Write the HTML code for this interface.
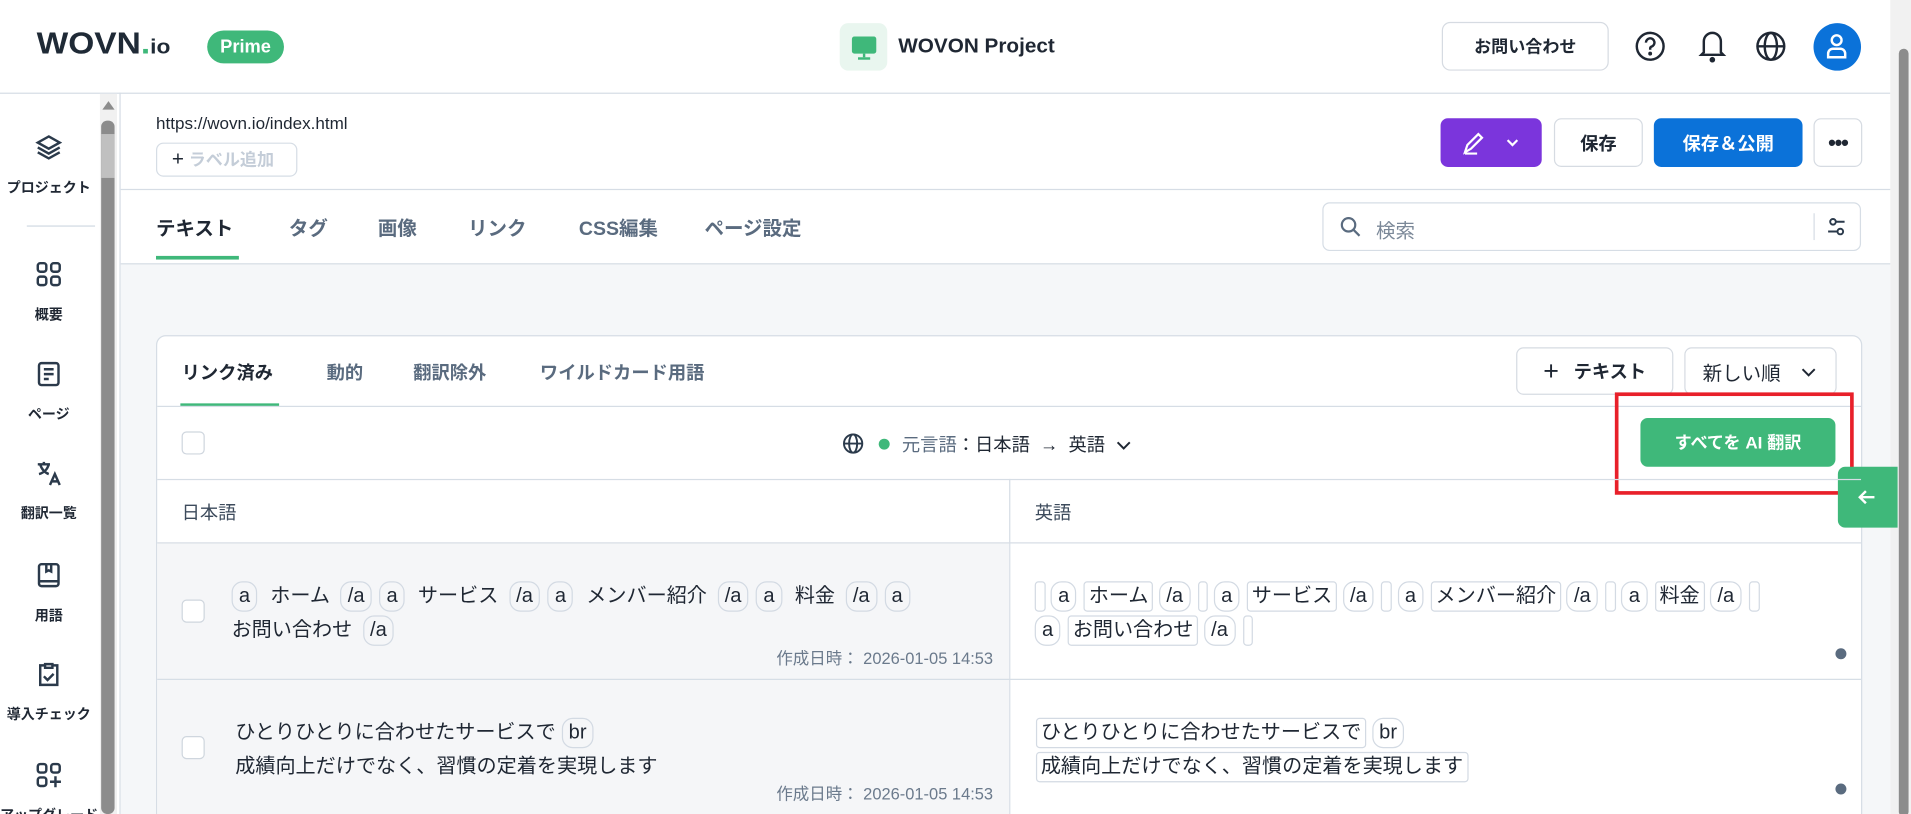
<!DOCTYPE html>
<html><head><meta charset="utf-8">
<style>
*{box-sizing:border-box;margin:0;padding:0}
html,body{width:1911px;height:814px;overflow:hidden;background:#fff}
#s{position:absolute;left:0;top:0;width:1568px;height:668px;overflow:hidden;transform:scale(1.21875,1.2186);transform-origin:0 0;font-family:"Liberation Sans","Noto Sans CJK JP",sans-serif;color:#1f2733}
.a{position:absolute}
.btn{position:absolute;border:1px solid #d6dbe2;border-radius:6px;background:#fff;display:flex;align-items:center;justify-content:center;font-weight:700;font-size:15px;color:#1f2733}
.nav{position:absolute;left:0;width:80px;text-align:center;font-size:11.5px;font-weight:700;color:#1f2733;white-space:nowrap;overflow:hidden}
.nav svg{display:block;margin:0 auto 14px}
.tab{position:absolute;top:174px;font-size:16px;font-weight:700;color:#5a6b7f}
.st{position:absolute;top:295px;font-size:15px;font-weight:700;color:#5a6b7f}
.t{display:inline-block;border:1px solid #d3dae3;border-radius:9px;padding:0 5px;line-height:23px;margin-right:6px;font-size:16.5px}
.r{display:inline-block;border:1px solid #d3dae3;border-radius:3px;padding:0 3px;line-height:23px;font-size:16.5px}
.cb{position:absolute;width:19px;height:19px;border:1px solid #cfd6de;border-radius:4px;background:#fff}
.txt{position:absolute;font-size:16.5px;color:#1f2733;line-height:28px;white-space:nowrap}
.date{position:absolute;font-size:13.5px;color:#6b7a8c}
</style></head><body><div id="s">
<!-- header -->
<div class="a" style="left:30px;top:22px;font-size:25px;font-weight:900;color:#1f2a36;letter-spacing:0px;transform:scaleX(1.1);transform-origin:0 0">WOVN<span style="color:#3fb87a">.</span><span style="font-size:17px">io</span></div>
<div class="a" style="left:170px;top:25px;width:63px;height:27px;border-radius:14px;background:#3fb87a;color:#fff;font-weight:700;font-size:15px;text-align:center;line-height:27px">Prime</div>
<div class="a" style="left:689px;top:19px;width:39px;height:39px;border-radius:7px;background:#e9f6ef"></div>
<svg class="a" style="left:697px;top:27px" width="24" height="24" viewBox="0 0 24 24"><rect x="2" y="3" width="20" height="14" rx="2" fill="#3fb87a"/><rect x="11" y="17" width="2" height="3" fill="#3fb87a"/><rect x="7" y="20" width="10" height="2" fill="#3fb87a"/></svg>
<div class="a" style="left:737px;top:28px;font-size:17px;font-weight:700">WOVON Project</div>
<div class="btn" style="left:1183px;top:18px;width:137px;height:40px;border-radius:7px;font-size:14px">お問い合わせ</div>
<svg class="a" style="left:1341px;top:25px" width="26" height="26" viewBox="0 0 26 26" fill="none" stroke="#1f2733" stroke-width="2"><circle cx="13" cy="13" r="11"/><path d="M9.5 10a3.5 3.5 0 1 1 4.5 3.3c-.7.3-1 .8-1 1.5v1"/><circle cx="13" cy="19" r=".6" fill="#1f2733"/></svg>
<svg class="a" style="left:1392px;top:24px" width="26" height="28" viewBox="0 0 26 28" fill="none" stroke="#1f2733" stroke-width="2"><path d="M13 3a7 7 0 0 0-7 7v9l-2 2h18l-2-2v-9a7 7 0 0 0-7-7z"/><circle cx="13" cy="25" r="1.3" fill="#1f2733"/></svg>
<svg class="a" style="left:1440px;top:25px" width="26" height="26" viewBox="0 0 26 26" fill="none" stroke="#1f2733" stroke-width="2"><circle cx="13" cy="13" r="11"/><ellipse cx="13" cy="13" rx="5" ry="11"/><path d="M2 13h22"/></svg>
<div class="a" style="left:1488px;top:19px;width:39px;height:39px;border-radius:50%;background:#0b72d9"></div>
<svg class="a" style="left:1497px;top:27px" width="20" height="22" viewBox="0 0 20 22" fill="none" stroke="#fff" stroke-width="2"><circle cx="10" cy="6" r="4"/><path d="M3 20v-3a4 4 0 0 1 4-4h6a4 4 0 0 1 4 4v3z"/></svg>
<div class="a" style="left:0;top:76px;width:1551px;height:1px;background:#d6dde5"></div>
<!-- page scrollbar -->
<div class="a" style="left:1551px;top:0;width:17px;height:668px;background:#f1f1f1"></div>
<div class="a" style="left:1558px;top:40px;width:8px;height:630px;border-radius:4px;background:#8c8c8c"></div>
<!-- sidebar -->
<div class="a" style="left:98px;top:76px;width:1px;height:592px;background:#d6dde5"></div>
<div class="a" style="left:82px;top:77px;width:14px;height:591px;background:#f1f1f1"></div>
<div class="a" style="left:84px;top:83px;width:0;height:0;border-left:5px solid transparent;border-right:5px solid transparent;border-bottom:7px solid #8c8c8c"></div>
<div class="a" style="left:83px;top:99px;width:11px;height:569px;border-radius:5px;background:#8c8c8c"></div>
<div class="a" style="left:83px;top:110px;width:11px;height:36px;background:#c0c0c0"></div>
<div class="nav" style="top:110px"><svg width="22" height="22" viewBox="0 0 22 22" fill="none" stroke="#2b3a4b" stroke-width="2"><path d="M11 2l9 5-9 5-9-5z"/><path d="M2 11l9 5 9-5"/><path d="M2 15l9 5 9-5"/></svg>プロジェクト</div>
<div class="a" style="left:22px;top:185px;width:56px;height:1px;background:#d0d8e2"></div>
<div class="nav" style="top:214px"><svg width="22" height="22" viewBox="0 0 22 22" fill="none" stroke="#2b3a4b" stroke-width="2"><rect x="2" y="2" width="7" height="7" rx="2"/><rect x="13" y="2" width="7" height="7" rx="2"/><rect x="2" y="13" width="7" height="7" rx="2"/><rect x="13" y="13" width="7" height="7" rx="2"/></svg>概要</div>
<div class="nav" style="top:296px"><svg width="22" height="22" viewBox="0 0 22 22" fill="none" stroke="#2b3a4b" stroke-width="2"><rect x="3" y="2" width="16" height="18" rx="2"/><path d="M7 7h8M7 11h8M7 15h4"/></svg>ページ</div>
<div class="nav" style="top:377px"><svg width="22" height="22" viewBox="0 0 22 22" fill="none" stroke="#2b3a4b" stroke-width="2"><path d="M2 4h10M7 2v2M4 4c1 4 4 7 7 8M11 4c-1 4-4 7-8 8"/><path d="M12 21l4-9 4 9M13.5 18h5"/></svg>翻訳一覧</div>
<div class="nav" style="top:461px"><svg width="22" height="22" viewBox="0 0 22 22" fill="none" stroke="#2b3a4b" stroke-width="2"><rect x="3" y="2" width="16" height="18" rx="2"/><path d="M3 16h16M9 2v6l2-1 2 1V2"/></svg>用語</div>
<div class="nav" style="top:542px"><svg width="22" height="22" viewBox="0 0 22 22" fill="none" stroke="#2b3a4b" stroke-width="2"><path d="M8 4H4v16h14V4h-4"/><path d="M8 6V3h6v3z"/><path d="M7 13l3 3 5-5"/></svg>導入チェック</div>
<div class="nav" style="top:625px"><svg width="22" height="22" viewBox="0 0 22 22" fill="none" stroke="#2b3a4b" stroke-width="2"><rect x="2" y="2" width="7" height="7" rx="2"/><rect x="13" y="2" width="7" height="7" rx="2"/><rect x="2" y="13" width="7" height="7" rx="2"/><path d="M16.5 12v9M12 16.5h9"/></svg>アップグレード</div>
<!-- URL row -->
<div class="a" style="left:128px;top:93px;font-size:14px">https://wovn.io/index.html</div>
<div class="a" style="left:128px;top:117px;width:116px;height:28px;border:1px solid #d6dde5;border-radius:6px;font-size:14px;font-weight:700;color:#c4cdd8;line-height:26px;padding-left:12px"><span style="color:#1f2733;font-weight:400;font-size:17px">+</span> ラベル追加</div>
<div class="a" style="left:1182px;top:97px;width:83px;height:40px;border-radius:6px;background:#7b35dc"></div>
<svg class="a" style="left:1198px;top:105px" width="48" height="24" viewBox="0 0 48 24" fill="none" stroke="#fff" stroke-width="1.8"><path d="M4 20l2-6L15 5l3 3-9 9z"/><path d="M4 21h10"/><path d="M39 10l4 4 4-4"/></svg>
<div class="btn" style="left:1275px;top:97px;width:73px;height:40px">保存</div>
<div class="btn" style="left:1357px;top:97px;width:122px;height:40px;background:#0b72d9;border-color:#0b72d9;color:#fff">保存＆公開</div>
<div class="btn" style="left:1488px;top:97px;width:40px;height:40px;font-size:18px;letter-spacing:-1px">•••</div>
<div class="a" style="left:99px;top:155px;width:1452px;height:1px;background:#d6dde5"></div>
<!-- tabs -->
<div class="tab" style="left:128px;color:#1f2733">テキスト</div>
<div class="tab" style="left:237px">タグ</div>
<div class="tab" style="left:310px">画像</div>
<div class="tab" style="left:384px">リンク</div>
<div class="tab" style="left:475px">CSS編集</div>
<div class="tab" style="left:578px">ページ設定</div>
<div class="a" style="left:128px;top:210px;width:68px;height:3px;background:#3fb87a"></div>
<div class="a" style="left:1085px;top:166px;width:442px;height:40px;border:1px solid #d6dde5;border-radius:6px"></div>
<svg class="a" style="left:1099px;top:177px" width="18" height="18" viewBox="0 0 18 18" fill="none" stroke="#5a6b7f" stroke-width="1.8"><circle cx="7.5" cy="7.5" r="5.5"/><path d="M11.5 11.5l5 5"/></svg>
<div class="a" style="left:1129px;top:176px;font-size:16px;color:#7b8898">検索</div>
<div class="a" style="left:1488px;top:175px;width:1px;height:22px;background:#d6dde5"></div>
<svg class="a" style="left:1499px;top:177px" width="16" height="18" viewBox="0 0 16 18" fill="none" stroke="#2b3a4b" stroke-width="1.6"><circle cx="5" cy="5" r="2.3"/><path d="M7.5 5h7"/><circle cx="11" cy="13" r="2.3"/><path d="M1 13h7.5"/></svg>
<div class="a" style="left:99px;top:216px;width:1452px;height:452px;background:#f5f7f9;border-top:1px solid #d6dde5"></div>
<!-- card -->
<div class="a" style="left:128px;top:275px;width:1400px;height:400px;background:#fff;border:1px solid #d6dde5;border-radius:8px"></div>
<div class="st" style="left:149px;color:#1f2733">リンク済み</div>
<div class="st" style="left:268px">動的</div>
<div class="st" style="left:339px">翻訳除外</div>
<div class="st" style="left:443px">ワイルドカード用語</div>
<div class="a" style="left:148px;top:331px;width:81px;height:3px;background:#3fb87a"></div>
<div class="btn" style="left:1244px;top:285px;width:129px;height:39px"><span style="font-size:22px;font-weight:400;margin-right:12px">+</span>テキスト</div>
<div class="btn" style="left:1382px;top:285px;width:125px;height:39px;font-weight:400;font-size:16px;justify-content:flex-start;padding-left:14px">新しい順<svg style="margin-left:16px" width="14" height="10" viewBox="0 0 14 10" fill="none" stroke="#1f2733" stroke-width="1.6"><path d="M2 3l5 5 5-5"/></svg></div>
<div class="a" style="left:129px;top:333px;width:1398px;height:1px;background:#d6dde5"></div>
<div class="cb" style="left:149px;top:354px"></div>
<svg class="a" style="left:691px;top:355px" width="18" height="18" viewBox="0 0 18 18" fill="none" stroke="#2b3a4b" stroke-width="1.6"><circle cx="9" cy="9" r="7.5"/><ellipse cx="9" cy="9" rx="3.3" ry="7.5"/><path d="M1.5 9h15"/></svg>
<div class="a" style="left:721px;top:360px;width:9px;height:9px;border-radius:50%;background:#3fb87a"></div>
<div class="a" style="left:740px;top:354px;font-size:15px"><span style="color:#5a6b7f">元言語</span>：日本語 &nbsp;→&nbsp; 英語 &nbsp;<svg width="14" height="10" viewBox="0 0 14 10" fill="none" stroke="#1f2733" stroke-width="1.6"><path d="M2 3l5 5 5-5"/></svg></div>
<div class="btn" style="left:1346px;top:343px;width:160px;height:40px;background:#3fb87a;border-color:#3fb87a;color:#fff;font-size:14px">すべてを AI 翻訳</div>
<div class="a" style="left:1325px;top:322px;width:196px;height:84px;border:3px solid #e8202a"></div>
<div class="a" style="left:1508px;top:383px;width:49px;height:50px;background:#3fb87a;border-radius:6px 0 0 6px"></div>
<svg class="a" style="left:1523px;top:399px" width="18" height="18" viewBox="0 0 18 18" fill="none" stroke="#fff" stroke-width="2"><path d="M15 9H3M8 4L3 9l5 5"/></svg>
<div class="a" style="left:129px;top:393px;width:1398px;height:1px;background:#d6dde5"></div>
<div class="a" style="left:149px;top:410px;font-size:15px;color:#3d4b5c">日本語</div>
<div class="a" style="left:849px;top:410px;font-size:15px;color:#3d4b5c">英語</div>
<div class="a" style="left:828px;top:393px;width:1px;height:280px;background:#d6dde5"></div>
<div class="a" style="left:129px;top:445px;width:1398px;height:1px;background:#d6dde5"></div>
<div class="a" style="left:129px;top:446px;width:699px;height:222px;background:#f5f6f8"></div>
<div class="a" style="left:129px;top:557px;width:1398px;height:1px;background:#d6dde5"></div>
<!-- row1 -->
<div class="cb" style="left:149px;top:492px"></div>
<div class="txt" style="left:190px;top:475px"><span class="t">a</span> ホーム <span class="t" style="margin-left:4px">/a</span><span class="t">a</span> サービス <span class="t" style="margin-left:4px">/a</span><span class="t">a</span> メンバー紹介 <span class="t" style="margin-left:4px">/a</span><span class="t">a</span> 料金 <span class="t" style="margin-left:4px">/a</span><span class="t">a</span><br>お問い合わせ <span class="t" style="margin-left:4px">/a</span></div>
<div class="date" style="left:637px;top:529px">作成日時： 2026-01-05 14:53</div>
<div class="txt" style="left:849px;top:475px"><span class="r" style="padding:0 1px">&nbsp;</span> <span class="t">a</span><span class="r">ホーム</span> <span class="t">/a</span><span class="r" style="padding:0 1px">&nbsp;</span> <span class="t">a</span><span class="r">サービス</span> <span class="t">/a</span><span class="r" style="padding:0 1px">&nbsp;</span> <span class="t">a</span><span class="r">メンバー紹介</span> <span class="t">/a</span><span class="r" style="padding:0 1px">&nbsp;</span> <span class="t">a</span><span class="r">料金</span> <span class="t">/a</span><span class="r" style="padding:0 1px">&nbsp;</span><br><span class="t">a</span><span class="r">お問い合わせ</span> <span class="t">/a</span><span class="r" style="padding:0 1px">&nbsp;</span></div>
<div class="a" style="left:1506px;top:532px;width:9px;height:9px;border-radius:50%;background:#5a6b7f"></div>
<!-- row2 -->
<div class="cb" style="left:149px;top:604px"></div>
<div class="txt" style="left:193px;top:587px">ひとりひとりに合わせたサービスで <span class="t">br</span><br>成績向上だけでなく、習慣の定着を実現します</div>
<div class="date" style="left:637px;top:640px">作成日時： 2026-01-05 14:53</div>
<div class="txt" style="left:850px;top:587px"><span class="r">ひとりひとりに合わせたサービスで</span> <span class="t">br</span><br><span class="r" style="margin-top:2px">成績向上だけでなく、習慣の定着を実現します</span></div>
<div class="a" style="left:1506px;top:643px;width:9px;height:9px;border-radius:50%;background:#5a6b7f"></div>
</div></body></html>
